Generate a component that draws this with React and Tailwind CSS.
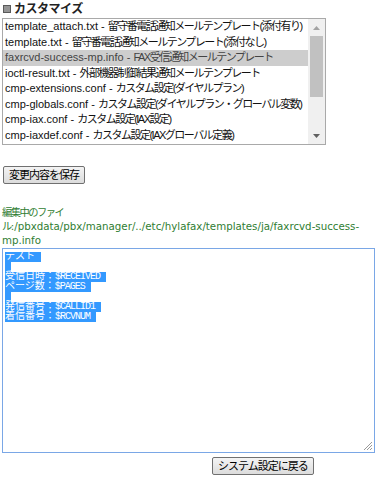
const items = [
  ['template_attach.txt', '留守番電話通知メールテンプレート(添付有り)'],
  ['template.txt', '留守番電話通知メールテンプレート(添付なし)'],
  ['faxrcvd-success-mp.info', 'FAX受信通知メールテンプレート'],
  ['ioctl-result.txt', '外部機器制御結果通知メールテンプレート'],
  ['cmp-extensions.conf', 'カスタム設定(ダイヤルプラン)'],
  ['cmp-globals.conf', 'カスタム設定(ダイヤルプラン・グローバル変数)'],
  ['cmp-iax.conf', 'カスタム設定(IAX設定)'],
  ['cmp-iaxdef.conf', 'カスタム設定(IAXグローバル定義)'],
]

const lines = [
  ['テスト', ''],
  ['', ''],
  ['受信日時：', '$RECEIVED'],
  ['ページ数：', '$PAGES'],
  ['', ''],
  ['発信番号：', '$CALLID1'],
  ['着信番号：', '$RCVNUM'],
]

const jp = { fontFamily: '"Liberation Sans", "Noto Sans CJK JP", sans-serif' }
const mono = { fontFamily: '"Liberation Mono", "Noto Sans CJK JP", monospace' }

function Button({ children }) {
  return (
    <button
      className="h-[18px] px-[5px] flex items-center border border-[#707070] rounded-[2px] bg-linear-to-b from-[#f4f4f4] to-[#dcdcdc] text-[11px] leading-[16px] text-black tracking-[-1px]"
      style={jp}
    >
      {children}
    </button>
  )
}

export default function App() {
  return (
    <div className="bg-white w-[378px] h-[479px] pl-[2px] text-black" style={jp}>
      <div className="h-[18px] flex items-center gap-[3px] pl-[1px]">
        <svg width="8" height="8" viewBox="0 0 8 8">
          <rect width="8" height="8" fill="#5a5a5a" />
          <rect x="1" y="1.5" width="6" height="1" fill="#cfcfcf" />
          <rect x="1" y="3.5" width="6" height="1" fill="#cfcfcf" />
          <rect x="1" y="5.5" width="6" height="1" fill="#cfcfcf" />
        </svg>
        <span className="text-[12px] leading-[14px] font-bold text-[#222] tracking-[-0.5px]">カスタマイズ</span>
      </div>

      {/* file list */}
      <div className="w-[324px] h-[127px] border border-[#a9a9a9] flex bg-white">
        <div className="flex-1 overflow-hidden">
          {items.map(([file, desc], i) => (
            <div
              key={file}
              className={`h-[15.5px] leading-[15.5px] px-[2px] whitespace-nowrap text-[11px] ${
                i === 2 ? 'bg-[#cdcdcd] text-[#444]' : 'text-[#111]'
              }`}
            >
              {file} - <span className="tracking-[-1.5px]">{desc}</span>
            </div>
          ))}
        </div>
        <div className="w-[17px] bg-[#f0f0f0] flex flex-col">
          <div className="h-[17px] flex items-center justify-center">
            <svg width="7" height="4" viewBox="0 0 7 4">
              <polygon points="0,4 7,4 3.5,0" fill="#a3a3a3" />
            </svg>
          </div>
          <div className="mx-[2px] h-[61px] bg-[#c1c1c1]" />
          <div className="flex-1" />
          <div className="h-[17px] flex items-center justify-center">
            <svg width="7" height="4" viewBox="0 0 7 4">
              <polygon points="0,0 7,0 3.5,4" fill="#606060" />
            </svg>
          </div>
        </div>
      </div>

      <div className="mt-[21px] pl-[1px] flex">
        <Button>変更内容を保存</Button>
      </div>

      <div
        className="mt-[21px] text-[10.25px] leading-[14px] text-[#2f7d32] whitespace-nowrap"
        style={{ fontFamily: '"DejaVu Sans", "Noto Sans CJK JP", sans-serif' }}
      >
        <div className="h-[14px] tracking-[-1.5px]">編集中のファイ</div>
        <div className="h-[14px]">
          <span className="tracking-[-1.5px]">ル</span>:/pbxdata/pbx/manager/../etc/hylafax/templates/ja/faxrcvd-success-
        </div>
        <div className="h-[14px]">mp.info</div>
      </div>

      {/* editor */}
      <div className="relative mt-[1px] w-[373px] h-[205px] border border-[#7aa7e6] bg-white pt-[3px] pl-[2px]">
        {lines.map(([a, b], i) => (
          <div key={i} className="h-[10px] leading-[10px] text-[10px]" style={mono}>
            <span className="inline-block h-[10px] align-top bg-[#3399ff] text-white whitespace-pre">
              {a}
              <span className="tracking-[-1px]">{b}</span>
              <span className="inline-block w-[6px]" />
            </span>
          </div>
        ))}
        <svg className="absolute right-[2px] bottom-[2px]" width="9" height="9" viewBox="0 0 9 9">
          <line x1="1" y1="9" x2="9" y2="1" stroke="#9a9a9a" strokeWidth="1" />
          <line x1="4" y1="9" x2="9" y2="4" stroke="#9a9a9a" strokeWidth="1" />
          <line x1="7" y1="9" x2="9" y2="7" stroke="#9a9a9a" strokeWidth="1" />
        </svg>
      </div>

      <div className="mt-[4px] pl-[210px] flex">
        <Button>システム設定に戻る</Button>
      </div>
    </div>
  )
}
